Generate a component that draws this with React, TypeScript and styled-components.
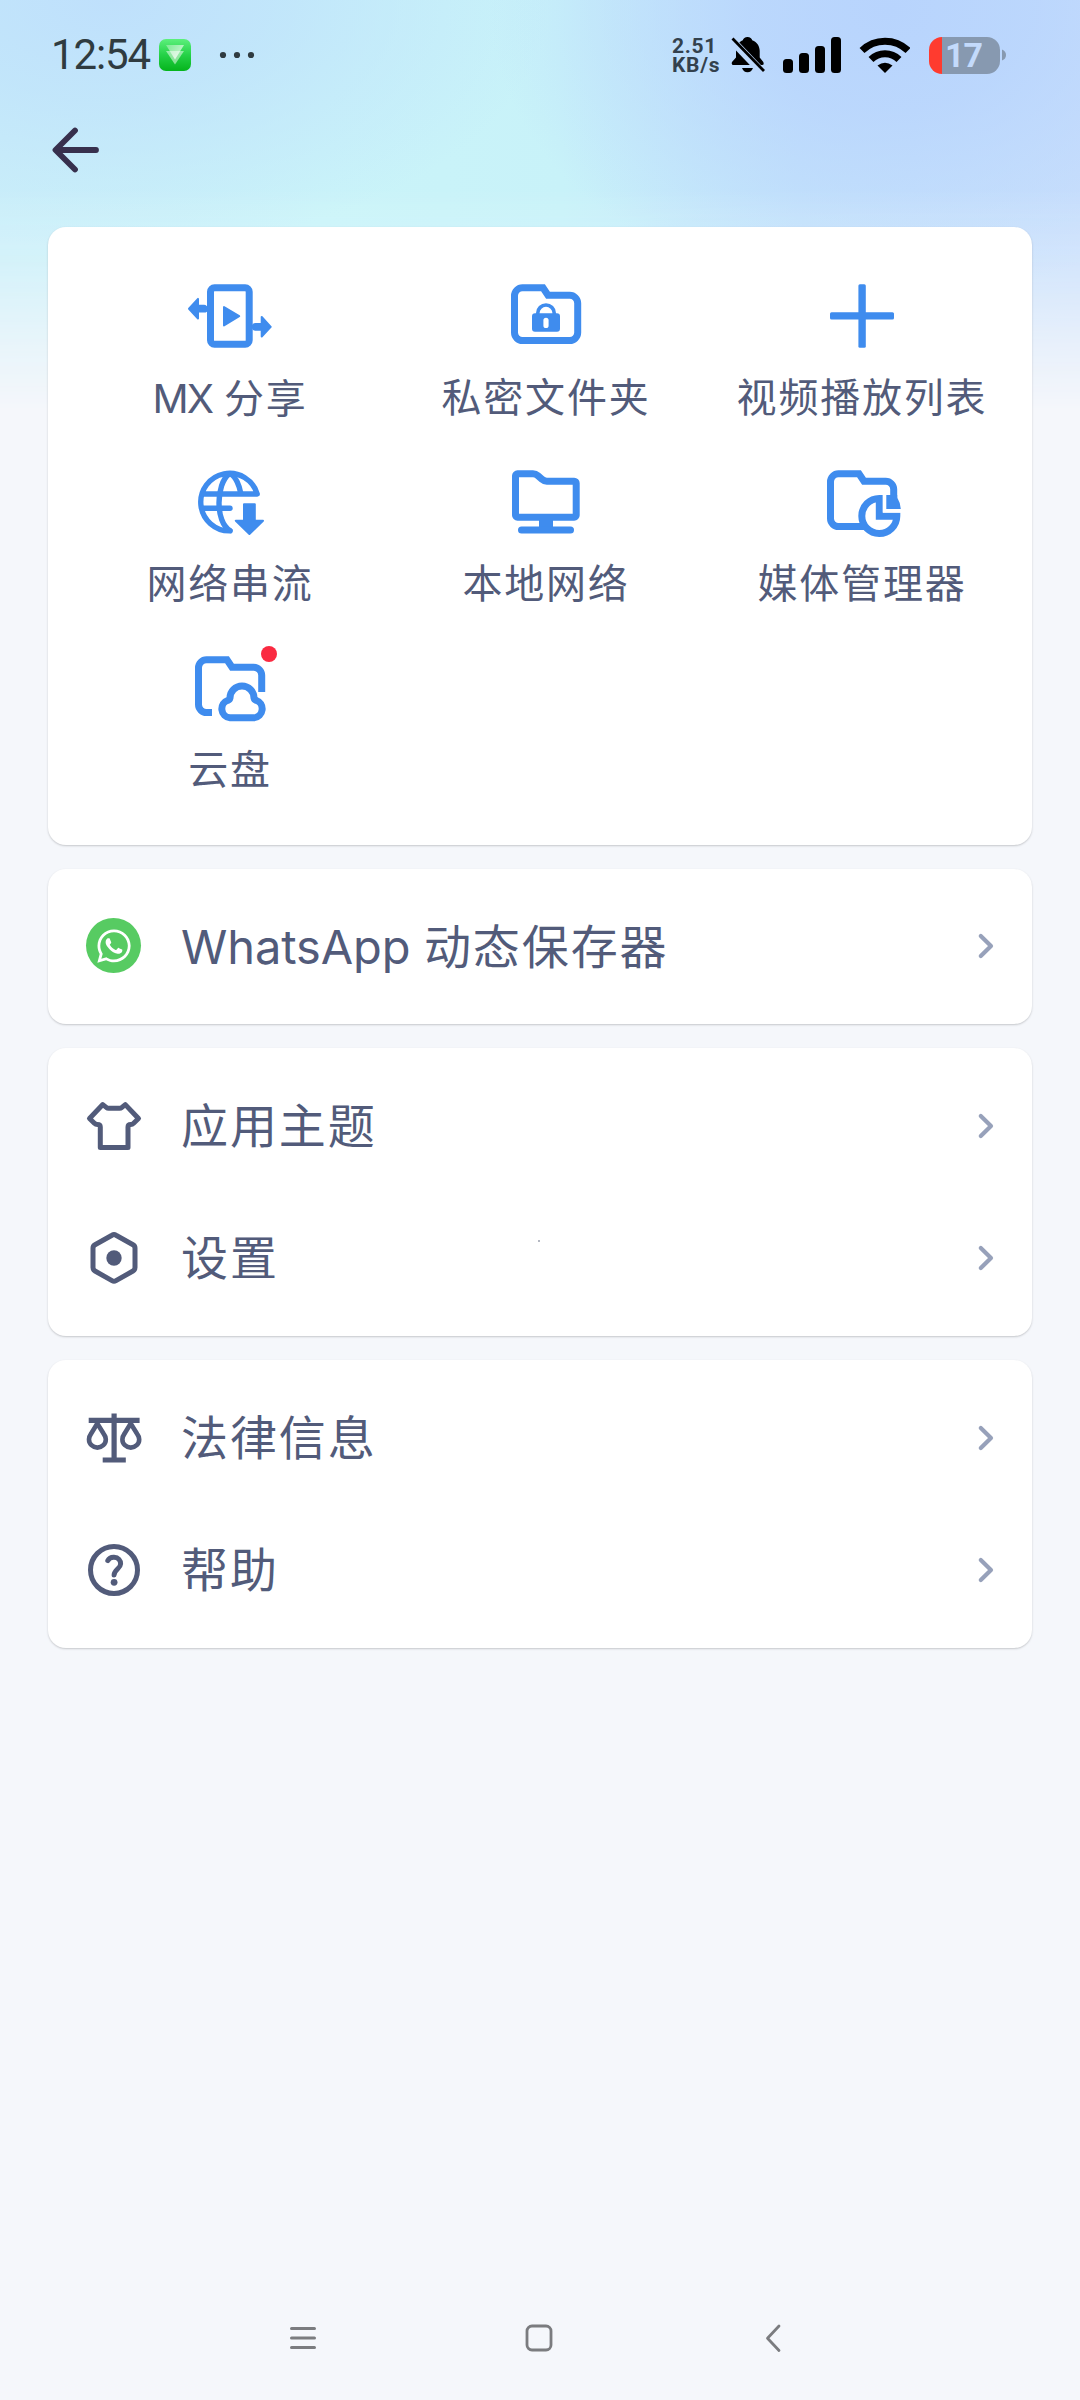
import React from "react";
import styled, { createGlobalStyle } from "styled-components";
import { FaWhatsapp } from "react-icons/fa";

const FONT = `Roboto, "Noto Sans CJK SC", sans-serif`;
const BLUE = "#3f8cee";
const INK = "#525b7a";

const GlobalStyle = createGlobalStyle`
  * { box-sizing: border-box; }
  body { margin: 0; background: #f5f7fb; }
`;

const Screen = styled.div`
  position: relative;
  width: 1080px;
  height: 2400px;
  display: flex;
  flex-direction: column;
  overflow: hidden;
  background: #f5f7fb;
  font-family: ${FONT};
  color: ${INK};
`;

const Glow = styled.div`
  position: absolute;
  inset: 0 0 auto 0;
  height: 410px;
  background:
    radial-gradient(ellipse 400px 290px at 890px 10px, #b8d4fd 0%, rgba(184, 212, 253, 0.8) 35%, rgba(190, 218, 252, 0) 100%),
    radial-gradient(ellipse 440px 250px at 110px 0px, #bfe0fc 0%, rgba(191, 226, 251, 0.75) 40%, rgba(200, 240, 250, 0) 100%),
    linear-gradient(90deg, #cbf0f9 0%, #caf4f9 30%, #c8f2f9 52%, #c5e5fb 74%, #cae0fc 100%);
  mask-image: linear-gradient(180deg, #000 0%, #000 46%, rgba(0, 0, 0, 0.78) 64%, rgba(0, 0, 0, 0.3) 84%, transparent 100%);
`;

const StatusBar = styled.header`
  position: relative;
  height: 110px;
  padding: 0 74px 0 51px;
  display: flex;
  align-items: center;
  justify-content: space-between;
`;

const StatusGroup = styled.div`
  display: flex;
  align-items: center;
`;

const Clock = styled.span`
  width: 108px;
  font-size: 42px;
  line-height: 48px;
  letter-spacing: -1.1px;
  color: #2f3b40;
`;

const Speed = styled.div`
  width: 59px;
  font-size: 21px;
  line-height: 19px;
  font-weight: 700;
  letter-spacing: 0.7px;
  white-space: pre-line;
  color: #33414d;
  padding-top: 2px;
`;

const Battery = styled.div`
  display: flex;
  align-items: center;
  justify-content: center;
  width: 71px;
  height: 37px;
  margin-left: 19px;
  padding-right: 2px;
  border-radius: 13px;
  background: linear-gradient(90deg, #ff3b2f 0 13px, #8799b0 13px);
  color: #c3dafb;
  font-size: 34px;
  font-weight: 700;
  letter-spacing: -1px;
  line-height: 37px;
`;

const TopBar = styled.nav`
  position: relative;
  height: 117px;
  padding: 12px 0 0 46px;
`;

const Content = styled.main`
  position: relative;
  display: flex;
  flex-direction: column;
  gap: 24px;
  padding: 0 48px;
`;

const Card = styled.section<{ $pad: string; $height: number }>`
  position: relative;
  height: ${(p) => p.$height}px;
  padding: ${(p) => p.$pad};
  border-radius: 18px;
  background: #fff;
  box-shadow: 0 1px 2px rgba(60, 64, 70, 0.26);
`;

const Speck = styled.i`
  position: absolute;
  left: 490px;
  top: 192px;
  width: 2px;
  height: 2px;
  background: #b4b8c2;
`;

const Grid = styled.div`
  display: grid;
  grid-template-columns: repeat(3, 1fr);
  grid-auto-rows: 186px;
`;

const Tile = styled.div`
  display: flex;
  flex-direction: column;
  align-items: center;
  gap: 17px;
`;

const TileIcon = styled.div`
  position: relative;
  width: 96px;
  height: 72px;
  svg { display: block; }
`;

const Badge = styled.i`
  position: absolute;
  left: 79px;
  top: -6px;
  width: 16px;
  height: 16px;
  border-radius: 50%;
  background: #fa2a41;
`;

const TileLabel = styled.span`
  font-size: 40px;
  line-height: 60px;
  letter-spacing: 1.8px;
  white-space: nowrap;
`;

const Latin = styled.span<{ $tracking: number }>`
  font-family: Inter, sans-serif;
  letter-spacing: ${(p) => p.$tracking}px;
`;

const Row = styled.div`
  height: 132px;
  display: flex;
  align-items: center;
  padding: 0 32px 0 34px;
`;

const RowIcon = styled.div`
  width: 64px;
  height: 64px;
  svg { display: block; }
`;

const WhatsBadge = styled.div`
  width: 55px;
  height: 55px;
  margin: 4px;
  border-radius: 50%;
  display: flex;
  align-items: center;
  justify-content: center;
  background: #57cb62;
  color: #fff;
`;

const RowLabel = styled.span`
  flex: 1;
  padding: 2px 0 0 35px;
  font-size: 47px;
  line-height: 66px;
  letter-spacing: 1.9px;
  white-space: nowrap;
`;

const NavBar = styled.footer`
  position: relative;
  margin-top: auto;
  height: 124px;
  padding: 0 288px 0 285px;
  display: flex;
  align-items: center;
  justify-content: space-between;
`;

const tileStroke = { fill: "none", stroke: BLUE, strokeWidth: 7 } as const;

const TileSvg = ({ children }: { children: React.ReactNode }) => (
  <svg width="96" height="72" viewBox="0 0 96 72">{children}</svg>
);

const ShareIcon = () => (
  <TileSvg>
    <rect x="28.5" y="7.8" width="38.7" height="56.4" rx="4" {...tileStroke} />
    <g fill={BLUE} stroke={BLUE} strokeWidth="2" strokeLinejoin="round">
      <path d="M42 27v18.4L57.2 36.2z" />
      <path d="M7 28.7 16 18.9v6.9h6a2.8 2.8 0 0 1 0 5.8h-6v6.9z" />
      <path d="M88.7 46.9 79.7 37v6.9h-6a2.8 2.8 0 0 0 0 5.8h6v6.9z" />
    </g>
  </TileSvg>
);

const LockFolderIcon = () => (
  <TileSvg>
    <path d="M24.5 7.8H45L50 15.3H71.7a8 8 0 0 1 8 8V52.5a8 8 0 0 1-8 8H24.5a8 8 0 0 1-8-8V15.8a8 8 0 0 1 8-8Z" {...tileStroke} />
    <path d="M39.8 35V33a8.2 8 0 0 1 16.4 0V35" fill="none" stroke={BLUE} strokeWidth="3.6" />
    <path fillRule="evenodd" fill={BLUE} d="M37 33.3H59a3 3 0 0 1 3 3V48.7a3 3 0 0 1-3 3H37a3 3 0 0 1-3-3V36.3a3 3 0 0 1 3-3ZM48 37.7a2.6 2.6 0 0 0-2.6 2.6v5.2a2.6 2.6 0 0 0 5.2 0v-5.2A2.6 2.6 0 0 0 48 37.7Z" />
  </TileSvg>
);

const PlusIcon = () => (
  <TileSvg>
    <rect x="44.4" y="4.3" width="7.4" height="63.4" rx="1.5" fill={BLUE} />
    <rect x="16" y="32.2" width="64" height="7.4" rx="1.5" fill={BLUE} />
  </TileSvg>
);

const GlobeIcon = () => (
  <TileSvg>
    <g fill="none" stroke={BLUE} strokeWidth="5.4" strokeLinecap="round" strokeLinejoin="round">
      <path d="M48 64.9A28.8 28.8 0 1 1 75.2 28H20.5" />
      <path d="M20.5 42.3H48" />
      <path d="M47 8C34 18 33 56 48 64.5" />
      <path d="M48.5 8C54 11 57.5 20 58.7 27" />
    </g>
    <path d="M62 38.3H72.8V54.8H81L67.4 68 53.8 54.8H62Z" fill={BLUE} stroke={BLUE} strokeWidth="2" strokeLinejoin="round" />
  </TileSvg>
);

const LocalIcon = () => (
  <TileSvg>
    <path d="M19.5 7.8H35q2.8 0 4.8 1.8l4 3.6q2.2 2 5 2H76.2a2 2 0 0 1 2 2V49.2a2 2 0 0 1-2 2H19.5a2 2 0 0 1-2-2V9.8a2 2 0 0 1 2-2Z" {...tileStroke} />
    <path d="M41 53H55V62H41Z" fill={BLUE} />
    <path d="M23.5 64H72.5" {...tileStroke} strokeLinecap="round" />
  </TileSvg>
);

const MediaIcon = () => (
  <TileSvg>
    <path d="M51 60.5H24.5a8 8 0 0 1-8-8V15.8a8 8 0 0 1 8-8H45L50 15.3H71.7a8 8 0 0 1 8 8V32" {...tileStroke} />
    <path d="M65.3 32.5A17.5 17.5 0 1 0 82.8 50.2H65.3Z" fill="#fff" stroke={BLUE} strokeWidth="7" />
    <path d="M68.8 27.5H72.3V43H88V46.5H68.8Z" fill="#fff" />
    <path d="M72.3 29H83.2V31.6Q86.3 36.5 86.8 43H72.3Z" fill={BLUE} />
  </TileSvg>
);

const CloudIcon = () => (
  <TileSvg>
    <path d="M30 60.5H24.5a8 8 0 0 1-8-8V15.8a8 8 0 0 1 8-8H45L50 15.3H71.7a8 8 0 0 1 8 8V40" {...tileStroke} />
    <path d="M48 65.8H72A9 9 0 0 0 74 48.3Q72.3 47.8 72 46A12 12 0 0 0 48 46Q47.7 47.8 46 48.3A9 9 0 0 0 48 65.8Z" {...tileStroke} />
  </TileSvg>
);

const RowSvg = ({ children }: { children: React.ReactNode }) => (
  <svg width="64" height="64" viewBox="0 0 64 64" fill="none" stroke={INK} strokeWidth="5" strokeLinecap="round" strokeLinejoin="round">
    {children}
  </svg>
);

const ShirtIcon = () => (
  <RowSvg>
    <path d="M20.8 10.6 24.6 13.6Q25.4 14.3 26.6 14.3H37.6Q38.8 14.3 39.6 13.6L43.3 10.6 56.5 24.5 51.6 29.2Q50.4 30.4 48.8 30.4 46 30.4 46 33V53.4H18.3V33Q18.3 30.4 15.4 30.4 13.6 30.4 12.4 29.2L7.5 24.5Z" />
  </RowSvg>
);

const SettingsIcon = () => (
  <RowSvg>
    <path d="M30 9.2Q32 8 34 9.2L51 18.7Q53 19.8 53 22V41.6Q53 43.9 51 45L34 54.6Q32 55.7 30 54.6L13 45Q11 43.9 11 41.6V22Q11 19.8 13 18.7Z" />
    <circle cx="32" cy="32" r="7.7" fill={INK} stroke="none" />
  </RowSvg>
);

const LegalIcon = () => (
  <RowSvg>
    <g strokeLinecap="butt">
      <path d="M6.7 14.4H57.6M32.1 7.4V53M20.7 54H43.8" strokeWidth="5.2" />
      <path d="M15.3 17.5 8.9 28A8.4 9 0 0 0 7 33.4a8.4 8.2 0 0 0 16.8 0A8.4 9 0 0 0 21.8 28ZM48.7 17.5 42.3 28A8.4 9 0 0 0 40.4 33.4a8.4 8.2 0 0 0 16.8 0A8.4 9 0 0 0 55.2 28Z" strokeWidth="4.6" />
    </g>
  </RowSvg>
);

const HelpIcon = () => (
  <RowSvg>
    <circle cx="32" cy="32" r="23.5" />
    <path d="M25.8 22.6C27.2 19.8 29.6 19.2 32 19.3 36.4 19.5 38.7 22.6 38.6 26 38.4 30.6 32.2 31.6 32.1 37" />
    <circle cx="32.1" cy="44.3" r="3.4" fill={INK} stroke="none" />
  </RowSvg>
);

const Chevron = () => (
  <svg width="28" height="36" viewBox="0 0 28 36" fill="none" stroke="#97a1ba" strokeWidth="4.2" strokeLinecap="round" strokeLinejoin="round">
    <path d="M8.8 8 19 18 8.8 28" />
  </svg>
);

const tiles = [
  { latin: "MX", label: " 分享", Icon: ShareIcon },
  { label: "私密文件夹", Icon: LockFolderIcon },
  { label: "视频播放列表", Icon: PlusIcon },
  { label: "网络串流", Icon: GlobeIcon },
  { label: "本地网络", Icon: LocalIcon },
  { label: "媒体管理器", Icon: MediaIcon },
  { label: "云盘", Icon: CloudIcon, badge: true },
];

const MenuRow = ({ latin, label, children }: { latin?: string; label: string; children: React.ReactNode }) => (
  <Row>
    <RowIcon>{children}</RowIcon>
    <RowLabel>{latin && <Latin $tracking={-0.1}>{latin}</Latin>}{label}</RowLabel>
    <Chevron />
  </Row>
);

const StatusLeftIcons = () => (
  <svg width="100" height="36" viewBox="0 0 100 36">
    <defs>
      <linearGradient id="app" x1="0" y1="0" x2="0" y2="1">
        <stop offset="0" stopColor="#5df07c" />
        <stop offset="0.5" stopColor="#25d147" />
        <stop offset="1" stopColor="#05b41c" />
      </linearGradient>
      <linearGradient id="tri" x1="0" y1="0" x2="1" y2="1">
        <stop offset="0" stopColor="#fff" stopOpacity="0.3" />
        <stop offset="1" stopColor="#fff" stopOpacity="0.9" />
      </linearGradient>
    </defs>
    <rect x="0" y="2" width="32" height="32" rx="7" fill="url(#app)" />
    <path d="M7 8H25L16 22.5Z" fill="url(#tri)" />
    <path d="M7 14H25L16 27.5Z" fill="#fff" opacity="0.5" />
    <g fill="#2f3b40">
      <circle cx="64" cy="18" r="3.1" />
      <circle cx="78" cy="18" r="3.1" />
      <circle cx="92" cy="18" r="3.1" />
    </g>
  </svg>
);

const StatusRightIcons = () => (
  <svg width="179" height="38" viewBox="0 0 179 38">
    <path d="M16.5 1c2.6 0 4.3 1.5 4.7 3.2 5 1.8 7.5 6.2 7.5 10.8v6.5l3.6 4.5q1.2 3-1.3 3H2.5q-2.5 0-1.5-3L5 21.5V15C5 10.4 7.5 6 11.8 4.2 12.3 2.5 14 1 16.5 1ZM11 32H22q-1.5 4.2-5.5 4.2T11 32Z" />
    <path d="M-1 2.5 32 37" stroke="#bcd8fc" strokeWidth="8" />
    <path d="M1.5 2.5 33 35" stroke="#000" strokeWidth="2.8" />
    <rect x="52" y="23" width="10" height="14" rx="3.5" />
    <rect x="68" y="17" width="10" height="20" rx="3.5" />
    <rect x="84" y="10" width="10" height="27" rx="3.5" />
    <rect x="100" y="1" width="10" height="36" rx="3.5" />
    <g fill="none" stroke="#000" strokeWidth="7">
      <path d="M131 14.5A33 33 0 0 1 177 14.5" />
      <path d="M140 23.5A20 20 0 0 1 168 23.5" />
    </g>
    <path d="M154 37 146.5 29.5Q154 24 161.5 29.5Z" />
  </svg>
);

export default function App() {
  return (
    <Screen>
      <GlobalStyle />
      <Glow />
      <StatusBar>
        <StatusGroup>
          <Clock>12:54</Clock>
          <StatusLeftIcons />
        </StatusGroup>
        <StatusGroup>
          <Speed>{"2.51\nKB/s"}</Speed>
          <StatusRightIcons />
          <Battery>17</Battery>
          <svg width="6" height="12" viewBox="0 0 6 12"><path d="M2 0.5Q6 2 6 6T2 11.5Z" fill="#8799b0" /></svg>
        </StatusGroup>
      </StatusBar>
      <TopBar>
        <svg width="56" height="56" viewBox="0 0 56 56" fill="none" stroke="#37304d" strokeWidth="5.8" strokeLinecap="round" strokeLinejoin="round">
          <path d="M29 8.5 9.5 28 29 47.5M11 28H50" />
        </svg>
      </TopBar>
      <Content>
        <Card $height={618} $pad="53px 12px 0 24px">
          <Grid>
            {tiles.map(({ latin, label, Icon, badge }) => (
              <Tile key={label}>
                <TileIcon>
                  <Icon />
                  {badge && <Badge />}
                </TileIcon>
                <TileLabel>{latin && <Latin $tracking={-1.8}>{latin}</Latin>}{label}</TileLabel>
              </Tile>
            ))}
          </Grid>
        </Card>
        <Card $height={155} $pad="11px 0">
          <MenuRow latin="WhatsApp" label=" 动态保存器">
            <WhatsBadge><FaWhatsapp size={38} /></WhatsBadge>
          </MenuRow>
        </Card>
        <Card $height={288} $pad="12px 0">
          <MenuRow label="应用主题"><ShirtIcon /></MenuRow>
          <MenuRow label="设置"><SettingsIcon /></MenuRow>
          <Speck />
        </Card>
        <Card $height={288} $pad="12px 0">
          <MenuRow label="法律信息"><LegalIcon /></MenuRow>
          <MenuRow label="帮助"><HelpIcon /></MenuRow>
        </Card>
      </Content>
      <NavBar>
        <svg width="36" height="36" viewBox="0 0 36 36" stroke="#7b7c7f" strokeWidth="3" strokeLinecap="round">
          <path d="M6.5 8.5H29.5M6.5 18H29.5M6.5 27.5H29.5" />
        </svg>
        <svg width="36" height="36" viewBox="0 0 36 36" fill="none" stroke="#7b7c7f" strokeWidth="2.8">
          <rect x="6" y="6" width="24" height="24" rx="5" />
        </svg>
        <svg width="36" height="36" viewBox="0 0 36 36" fill="none" stroke="#7b7c7f" strokeWidth="2.8" strokeLinecap="round" strokeLinejoin="round">
          <path d="M23 6 11.5 18.2 23 30.5" />
        </svg>
      </NavBar>
    </Screen>
  );
}
